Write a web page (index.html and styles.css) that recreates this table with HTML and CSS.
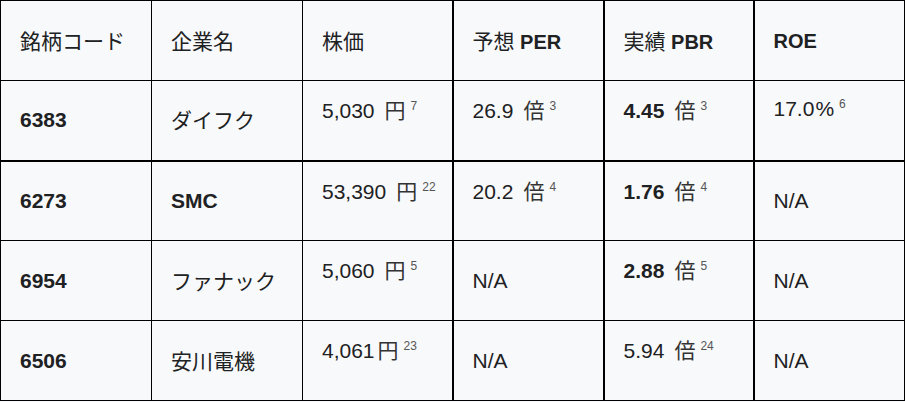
FILE: index.html
```html
<!DOCTYPE html>
<html lang="ja">
<head>
<meta charset="utf-8">
<link rel="stylesheet" href="styles.css">
</head>
<body>
<table class="stocks">
  <colgroup>
    <col class="col"><col class="col"><col class="col narrow"><col class="col"><col class="col narrow"><col class="col">
  </colgroup>
  <thead>
    <tr>
      <th><span class="ja">銘柄コード</span></th>
      <th><span class="ja">企業名</span></th>
      <th><span class="ja">株価</span></th>
      <th class="thick"><span class="ja">予想</span> <b>PER</b></th>
      <th class="thick"><span class="ja">実績</span> <b>PBR</b></th>
      <th><b>ROE</b></th>
    </tr>
  </thead>
  <tbody>
    <tr class="first">
      <td><b>6383</b></td>
      <td class="name"><span class="ja">ダイフク</span></td>
      <td class="top">5,030<span class="unit wide">円</span><sup>7</sup></td>
      <td class="top thick">26.9<span class="unit wide">倍</span><sup>3</sup></td>
      <td class="top thick"><b>4.45</b><span class="unit wide">倍</span><sup>3</sup></td>
      <td class="top">17.0<span class="pct">%</span><sup>6</sup></td>
    </tr>
    <tr>
      <td><b>6273</b></td>
      <td class="name"><b>SMC</b></td>
      <td class="top">53,390<span class="unit wide">円</span><sup>22</sup></td>
      <td class="top thick">20.2<span class="unit wide">倍</span><sup>4</sup></td>
      <td class="top thick"><b>1.76</b><span class="unit wide">倍</span><sup>4</sup></td>
      <td>N/A</td>
    </tr>
    <tr>
      <td><b>6954</b></td>
      <td class="name"><span class="ja">ファナック</span></td>
      <td class="top">5,060<span class="unit wide">円</span><sup>5</sup></td>
      <td class="thick">N/A</td>
      <td class="top thick"><b>2.88</b><span class="unit wide">倍</span><sup>5</sup></td>
      <td>N/A</td>
    </tr>
    <tr>
      <td><b>6506</b></td>
      <td class="name"><span class="ja">安川電機</span></td>
      <td class="top">4,061<span class="unit">円</span><sup>23</sup></td>
      <td class="thick">N/A</td>
      <td class="top thick">5.94<span class="unit wide">倍</span><sup>24</sup></td>
      <td>N/A</td>
    </tr>
  </tbody>
</table>
</body>
</html>
```

FILE: styles.css
```css
html, body {
  margin: 0;
  padding: 0;
  background: #f8f9fb;
}

.stocks {
  border-collapse: collapse;
  table-layout: fixed;
  width: 905px;
  font-family: "Liberation Sans", "Noto Sans CJK JP", sans-serif;
  font-size: 20px;
  color: #202122;
  background: #f8f9fb;
}

.col {
  width: 151px;
}

.col.narrow {
  width: 150px;
}

.stocks th,
.stocks td {
  border: 1px solid #000;
  height: 80px;
  padding: 0 8px 0 19px;
  text-align: left;
  vertical-align: middle;
  line-height: 24px;
  box-sizing: border-box;
  white-space: nowrap;
  overflow: hidden;
}

.stocks td {
  font-size: 21px;
}

.stocks th {
  font-weight: normal;
}

.stocks b {
  font-weight: bold;
}

.ja {
  font-family: "Noto Sans CJK JP", sans-serif;
  font-size: 21px;
}

.stocks .thick {
  border-left-width: 2px;
  border-right-width: 2px;
}

.stocks tbody tr:nth-child(2) td {
  border-top-width: 2px;
}

.stocks td.name {
  padding-left: 19px;
}

.stocks td.top {
  vertical-align: top;
  padding-top: 16px;
}

.unit {
  font-family: "Noto Sans CJK JP", sans-serif;
  font-size: 21px;
  font-weight: normal;
  color: #333;
  margin-left: 3px;
}

.unit.wide {
  margin-left: 10px;
}

.pct {
  margin-left: 1px;
}

sup {
  font-size: 12px;
  color: #555;
  vertical-align: 8px;
  line-height: 0;
  margin-left: 5px;
}
```
